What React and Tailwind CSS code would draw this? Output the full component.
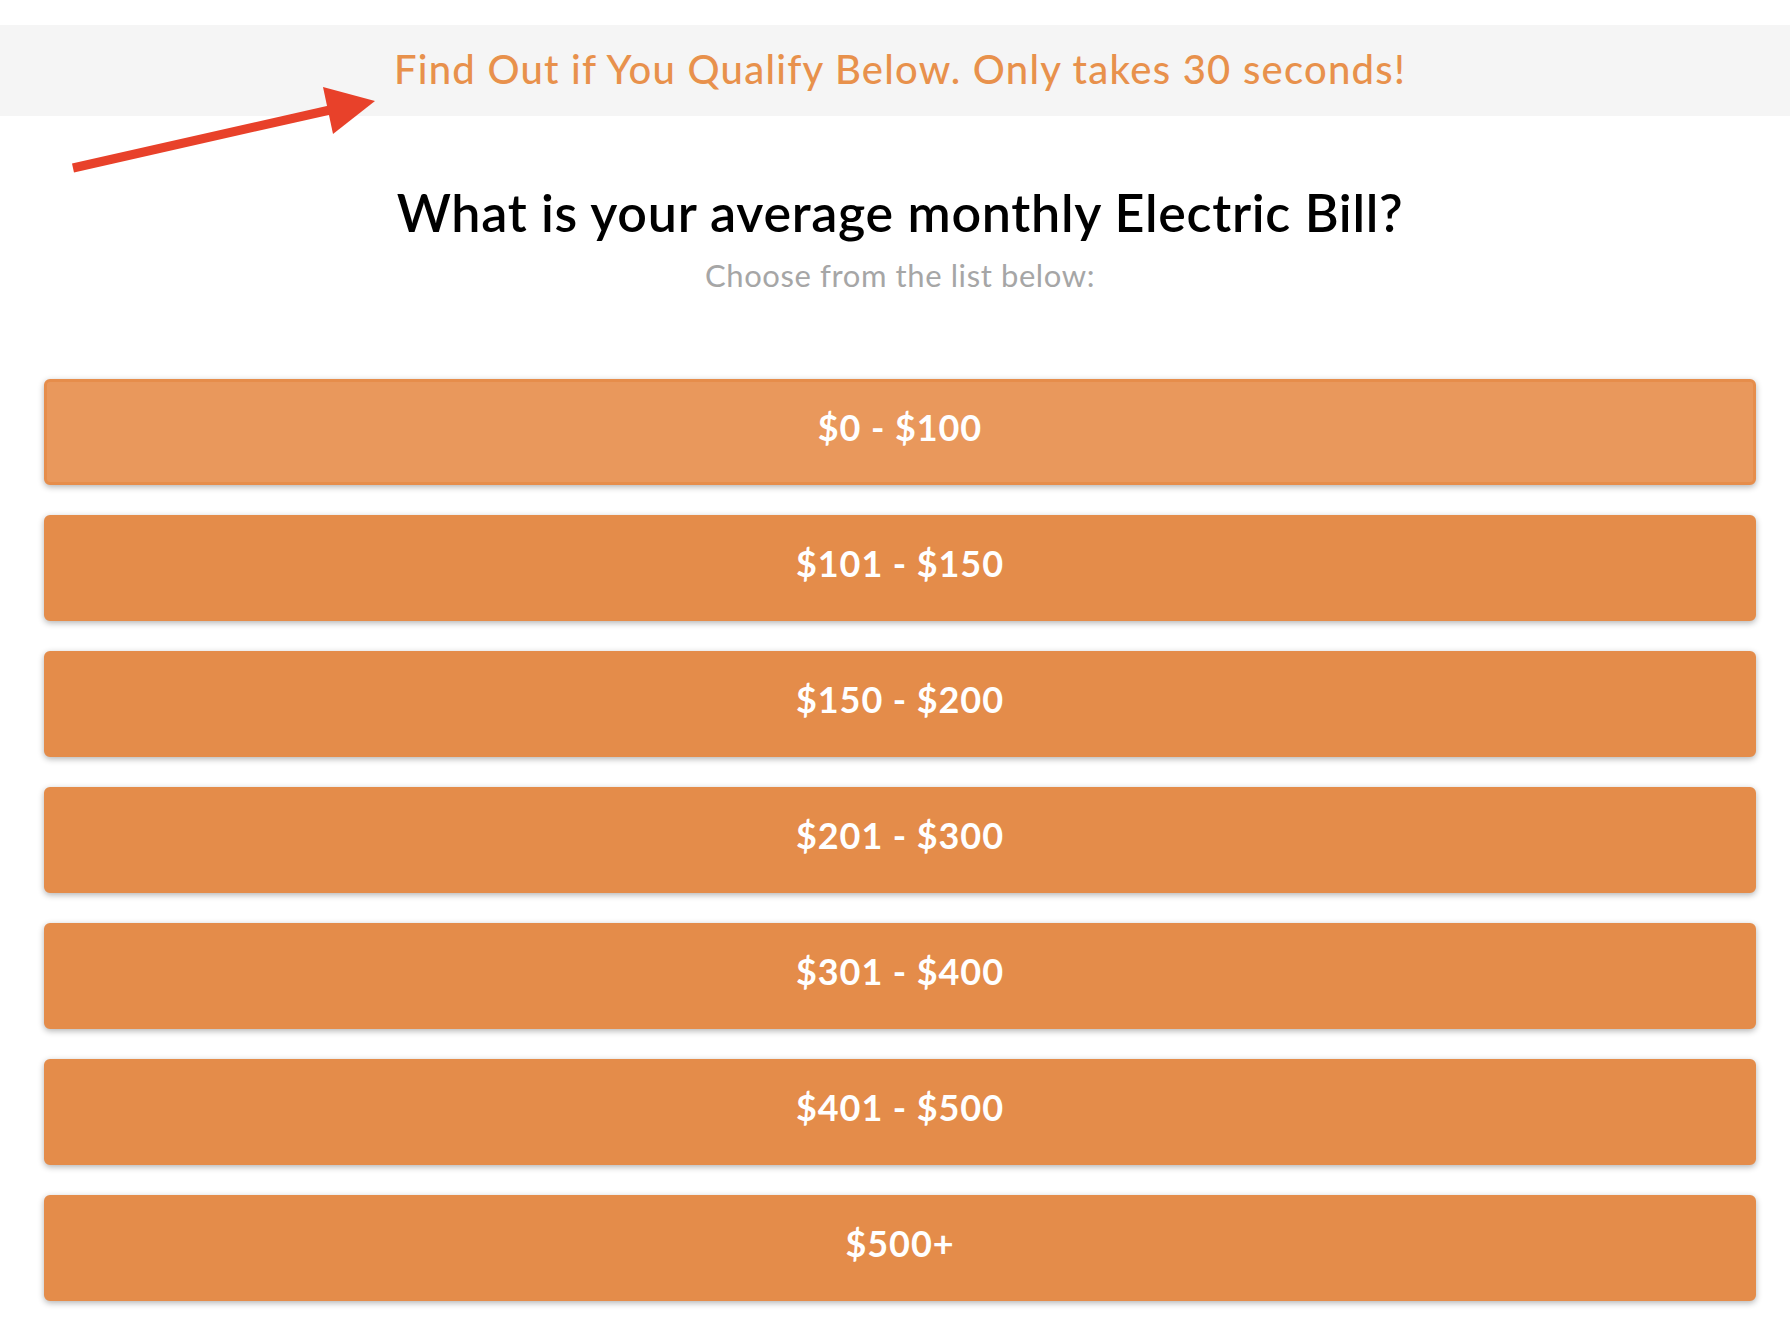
import { useState } from "react";

const options = [
    "$0 - $100",
    "$101 - $150",
    "$150 - $200",
    "$201 - $300",
    "$301 - $400",
    "$401 - $500",
    "$500+",
];

export default function App() {
    const [hovered, setHovered] = useState(0);

    return (
        <div className="relative min-h-screen bg-white font-['Lato','Noto_Sans',sans-serif]">
            {/* top spacer */}
            <div className="h-[25px]" />

            {/* Banner */}
            <div className="h-[91px] bg-[#f5f5f5] flex items-center justify-center pl-[10px] pb-[4px]">
                <p className="text-[40px] leading-none font-medium tracking-[1.25px] text-[#e8914c]">
                    Find Out if You Qualify Below. Only takes 30 seconds!
                </p>
            </div>

            {/* Annotation arrow */}
            <svg className="absolute left-0 top-0" width="400" height="200" viewBox="0 0 400 200">
                <line x1="73" y1="168" x2="330" y2="110" stroke="#e8412a" strokeWidth="9" />
                <polygon points="375,101 323,87 333,134" fill="#e8412a" />
            </svg>

            {/* Question */}
            <div className="pl-[10px] text-center">
                <h1 className="mt-[70px] text-[52px] leading-none font-semibold tracking-[0.7px] text-black">
                    What is your average monthly Electric Bill?
                </h1>
                <p className="mt-[22px] text-[31px] leading-none font-normal tracking-[0.6px] text-[#a6a6a6]">
                    Choose from the list below:
                </p>
            </div>

            {/* Options */}
            <div className="mt-[88px] pl-[44px] pr-[34px] flex flex-col gap-[30px] pb-10">
                {options.map((label, i) => (
                    <button
                        key={label}
                        onMouseEnter={() => setHovered(i)}
                        className={
                            hovered === i
                                ? "h-[106px] w-full pb-[10px] rounded-md border-[3px] border-[#e68d4b] bg-[#e9985c] text-white text-[36px] font-bold tracking-[0.9px] shadow-[0_2px_6px_rgba(0,0,0,0.3)] flex items-center justify-center"
                                : "h-[106px] w-full pb-[10px] rounded-md border-[3px] border-[#e48c4a] bg-[#e48c4a] text-white text-[36px] font-bold tracking-[0.9px] shadow-[0_2px_6px_rgba(0,0,0,0.3)] flex items-center justify-center"
                        }
                    >
                        {label}
                    </button>
                ))}
            </div>
        </div>
    );
}
